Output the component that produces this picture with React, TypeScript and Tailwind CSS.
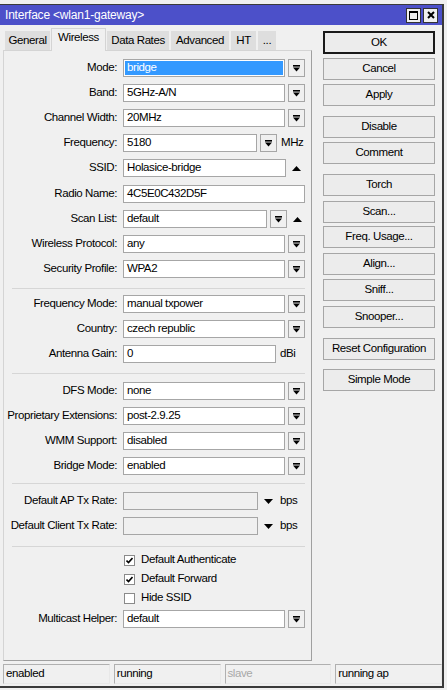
import React from 'react';

// Small "drop down" arrow with a bar on top, as drawn in WinBox combo buttons
function DropGlyph() {
  return (
    <svg width="7" height="7" viewBox="0 0 7 7">
      <rect x="0" y="0" width="7" height="1.6" fill="#000" />
      <path d="M0 2.6h7L3.5 6.6z" fill="#000" />
    </svg>
  );
}

function DropBtn() {
  return (
    <div className="ml-[3px] flex h-[18px] w-[17px] items-center justify-center border border-[#a6a6a6] bg-[#f0f0f0]">
      <DropGlyph />
    </div>
  );
}

function UpArrow() {
  return (
    <svg width="9" height="5" viewBox="0 0 9 5" className="ml-[6px]">
      <path d="M0 5h9L4.5 0z" fill="#000" />
    </svg>
  );
}

function DownArrow() {
  return (
    <svg width="9" height="5" viewBox="0 0 9 5" className="ml-[6px]">
      <path d="M0 0h9L4.5 5z" fill="#000" />
    </svg>
  );
}

function Field({ value, w, disabled }: { value?: string; w: string; disabled?: boolean }) {
  return (
    <div
      className={`flex h-[18px] items-center border border-[#a6a6a6] pl-[3px] ${w} ${
        disabled ? 'bg-[#f0f0f0]' : 'bg-white'
      }`}
    >
      {value}
    </div>
  );
}

function Row({ label, children }: { label: string; children: React.ReactNode }) {
  return (
    <div className="flex h-[18px] items-center">
      <div className="w-[113px] whitespace-nowrap text-right">{label}:</div>
      <div className="ml-[6px] flex items-center">{children}</div>
    </div>
  );
}

function Combo({ label, value }: { label: string; value: string }) {
  return (
    <Row label={label}>
      <Field value={value} w="w-[162px]" />
      <DropBtn />
    </Row>
  );
}

function Sep({ className }: { className: string }) {
  return <div className={`ml-[8px] h-px w-[293px] bg-[#d6d6d6] ${className}`} />;
}

function Check({ label, checked }: { label: string; checked: boolean }) {
  return (
    <div className="flex h-[18px] items-center pl-[120px]">
      <div className="flex h-[11px] w-[11px] items-center justify-center border border-[#8a8a8a] bg-white">
        {checked && (
          <svg width="7" height="7" viewBox="0 0 7 7">
            <path d="M0.5 3.5L2.5 5.5L6.5 1" stroke="#000" strokeWidth="1.6" fill="none" />
          </svg>
        )}
      </div>
      <span className="ml-[6px]">{label}</span>
    </div>
  );
}

function Btn({ label, primary, className = '' }: { label: string; primary?: boolean; className?: string }) {
  return (
    <div
      className={`flex items-center justify-center bg-[#ececec] ${
        primary ? 'h-[23px] border-2 border-[#1a1a1a]' : 'h-[22px] border border-[#a6a6a6]'
      } ${className}`}
    >
      {label}
    </div>
  );
}

const tabs = [
  { label: 'General', w: 'w-[47px]' },
  { label: 'Wireless', w: 'w-[55px]', active: true },
  { label: 'Data Rates', w: 'w-[64px]' },
  { label: 'Advanced', w: 'w-[60px]' },
  { label: 'HT', w: 'w-[27px]' },
  { label: '...', w: 'w-[20px]' },
];

const status = [
  { label: 'enabled' },
  { label: 'running' },
  { label: 'slave', dim: true },
  { label: 'running ap' },
];

export default function App() {
  return (
    <div className="h-[690px] w-[447px] overflow-hidden bg-[#f0f0f0] pt-[4px] font-['Liberation_Sans',Arial,sans-serif] text-[11.5px] tracking-[-0.4px] text-black">
      <div className="flex h-[684px] w-[444px] flex-col border-t border-r-2 border-b-2 border-[#3a3a3a] bg-[#f0f0f0]">
        {/* Title bar */}
        <div className="flex h-[20px] shrink-0 items-center bg-[#4c50c9] pl-[5px] pr-[4px] text-[12px] text-white">
          <span className="tracking-[-0.2px]">Interface &lt;wlan1-gateway&gt;</span>
          <div className="ml-auto flex gap-[2px]">
            <div className="flex h-[15px] w-[15px] items-center justify-center border border-[#333] bg-[#f0f0f0]">
              <div className="h-[9px] w-[9px] border border-t-2 border-black" />
            </div>
            <div className="flex h-[15px] w-[15px] items-center justify-center border border-[#333] bg-[#f0f0f0]">
              <svg width="8" height="8" viewBox="0 0 8 8">
                <path d="M1 1L7 7M7 1L1 7" stroke="#000" strokeWidth="2" />
              </svg>
            </div>
          </div>
        </div>

        {/* Body */}
        <div className="flex flex-1 pl-[3px]">
          <div className="flex w-[309px] flex-col">
            <div className="ml-[1px] flex h-[25px] items-end">
              {tabs.map((t) =>
                t.active ? (
                  <div
                    key={t.label}
                    className={`relative z-10 -mb-px flex h-[23px] items-center justify-center border border-b-0 border-[#d4d4d4] bg-[#f0f0f0] pb-[4px] ${t.w}`}
                  >
                    {t.label}
                  </div>
                ) : (
                  <div
                    key={t.label}
                    className={`flex h-[20px] items-center justify-center border border-b-0 border-[#f0f0f0] bg-[#dedede] ${t.w}`}
                  >
                    {t.label}
                  </div>
                )
              )}
            </div>
            <div className="flex h-[611px] flex-col border border-[#d4d4d4] border-r-[#a0a0a0] border-b-[#a0a0a0] pt-[8px]">
              <div className="flex flex-col gap-[7px]">
                <Row label="Mode">
                  <div className="flex h-[18px] w-[162px] items-center border border-[#a6a6a6] bg-white p-px">
                    <div className="flex h-full w-full items-center bg-[#3399ff] pl-[2px] text-white">bridge</div>
                  </div>
                  <DropBtn />
                </Row>
                <Combo label="Band" value="5GHz-A/N" />
                <Combo label="Channel Width" value="20MHz" />
                <Row label="Frequency">
                  <Field value="5180" w="w-[134px]" />
                  <DropBtn />
                  <span className="ml-[4px]">MHz</span>
                </Row>
                <Row label="SSID">
                  <Field value="Holasice-bridge" w="w-[163px]" />
                  <UpArrow />
                </Row>
                <div className="mt-px">
                  <Row label="Radio Name">
                    <Field value="4C5E0C432D5F" w="w-[182px]" />
                  </Row>
                </div>
                <Row label="Scan List">
                  <Field value="default" w="w-[144px]" />
                  <DropBtn />
                  <UpArrow />
                </Row>
                <Combo label="Wireless Protocol" value="any" />
                <Combo label="Security Profile" value="WPA2" />
              </div>

              <Sep className="mt-[10px]" />

              <div className="mt-[6px] flex flex-col gap-[7px]">
                <Combo label="Frequency Mode" value="manual txpower" />
                <Combo label="Country" value="czech republic" />
                <Row label="Antenna Gain">
                  <Field value="0" w="w-[153px]" />
                  <span className="ml-[4px]">dBi</span>
                </Row>
              </div>

              <Sep className="mt-[10px]" />

              <div className="mt-[8px] flex flex-col gap-[7px]">
                <Combo label="DFS Mode" value="none" />
                <Combo label="Proprietary Extensions" value="post-2.9.25" />
                <Combo label="WMM Support" value="disabled" />
                <Combo label="Bridge Mode" value="enabled" />
              </div>

              <Sep className="mt-[8px]" />

              <div className="mt-[8px] flex flex-col gap-[7px]">
                <Row label="Default AP Tx Rate">
                  <Field w="w-[135px]" disabled />
                  <DownArrow />
                  <span className="ml-[7px]">bps</span>
                </Row>
                <Row label="Default Client Tx Rate">
                  <Field w="w-[135px]" disabled />
                  <DownArrow />
                  <span className="ml-[7px]">bps</span>
                </Row>
              </div>

              <Sep className="mt-[11px]" />

              <div className="mt-[4px] flex flex-col gap-px">
                <Check label="Default Authenticate" checked />
                <Check label="Default Forward" checked />
                <Check label="Hide SSID" checked={false} />
              </div>

              <div className="mt-[3px]">
                <Combo label="Multicast Helper" value="default" />
              </div>
            </div>
          </div>

          {/* Right-hand buttons */}
          <div className="ml-[11px] flex w-[112px] flex-col pt-[6px]">
            <Btn label="OK" primary />
            <Btn label="Cancel" className="mt-[4px]" />
            <Btn label="Apply" className="mt-[4px]" />
            <Btn label="Disable" className="mt-[10px]" />
            <Btn label="Comment" className="mt-[4px]" />
            <Btn label="Torch" className="mt-[10px]" />
            <Btn label="Scan..." className="mt-[5px]" />
            <Btn label="Freq. Usage..." className="mt-[3px]" />
            <Btn label="Align..." className="mt-[5px]" />
            <Btn label="Sniff..." className="mt-[4px]" />
            <Btn label="Snooper..." className="mt-[5px]" />
            <Btn label="Reset Configuration" className="mt-[10px]" />
            <Btn label="Simple Mode" className="mt-[9px]" />
          </div>
        </div>

        {/* Status bar */}
        <div className="flex h-[24px] shrink-0 gap-[4px] pl-[3px] pt-[2px]">
          {status.map((s) => (
            <div
              key={s.label}
              className={`flex h-[20px] w-[108px] items-center border border-[#b0b0b0] border-r-[#e8e8e8] border-b-[#e8e8e8] pl-[2px] ${
                s.dim ? 'text-[#a8a8a8]' : ''
              }`}
            >
              {s.label}
            </div>
          ))}
        </div>
      </div>
    </div>
  );
}
